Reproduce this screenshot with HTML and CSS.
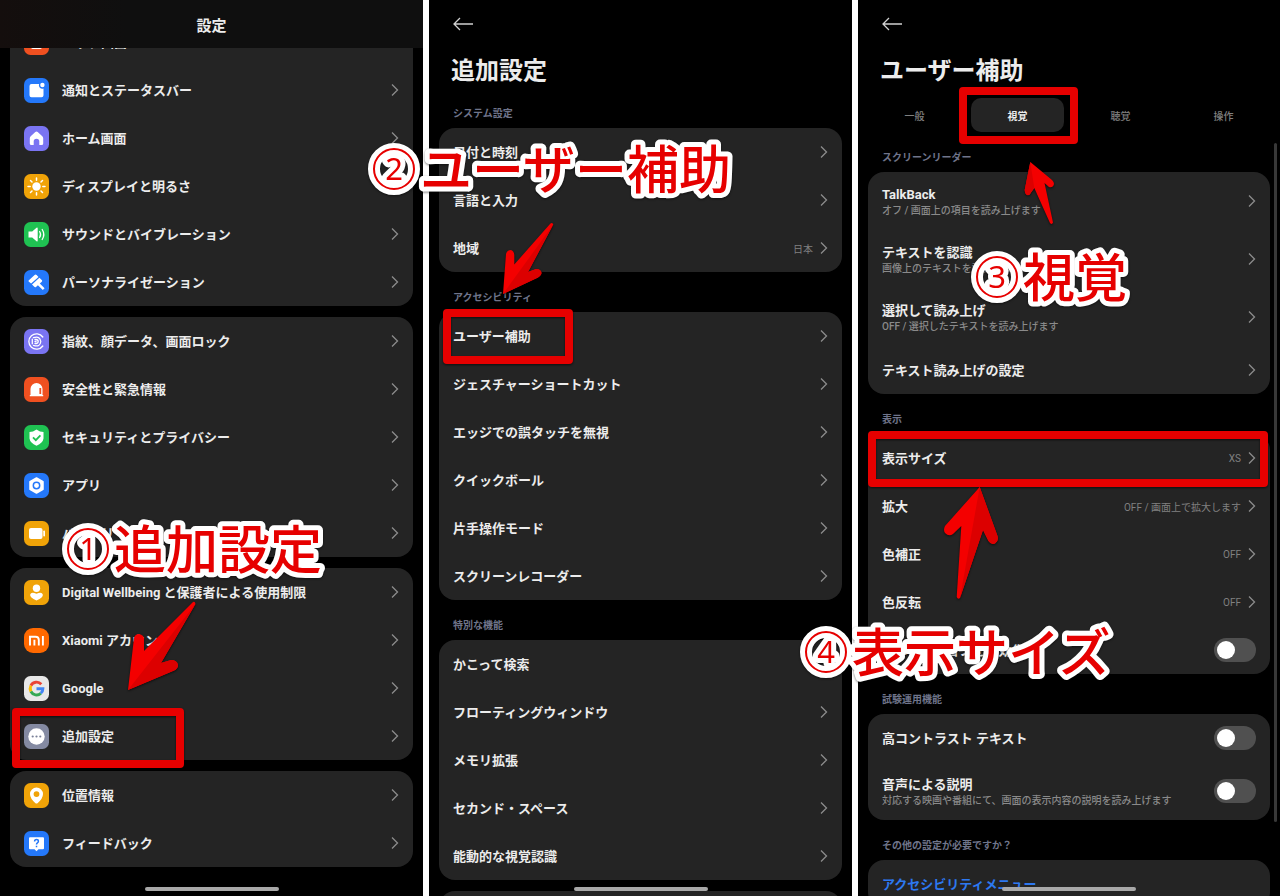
FILE: index.html
```
<!DOCTYPE html>
<html lang="ja">

<head>
    <meta charset="UTF-8">
    <meta name="viewport" content="width=device-width, initial-scale=1.0">
    <title>設定</title>
    <link rel="stylesheet" href="styles.css">
</head>

<body>
    <svg class="defs" aria-hidden="true">
        <symbol id="chevron" viewBox="0 0 8 14">
            <path d="M1 1.5l5.5 5.5L1 12.5" fill="none" stroke="#8c8c8c" stroke-width="1.3" />
        </symbol>
        <symbol id="back" viewBox="0 0 20 14">
            <path d="M7 1L1 7l6 6M1 7h19" fill="none" stroke="#d0d0d0" stroke-width="1.3" />
        </symbol>
    </svg>

    <main class="screens">
        <!-- settings top -->
        <section class="screen">
            <header class="bar">
                <h1>設定</h1>
            </header>
            <div class="scroll">
                <nav class="card">
                    <a class="row" href="#">
                        <svg class="icon" viewBox="0 0 25 25"><rect width="25" height="25" rx="6.5" fill="#f05020" /><rect x="7" y="6" width="11" height="13" rx="2" fill="#fff" /></svg>
                        <span class="name">ロック画面</span>
                        <svg class="chevron"><use href="#chevron" /></svg>
                    </a>
                    <a class="row" href="#">
                        <svg class="icon" viewBox="0 0 25 25"><rect width="25" height="25" rx="6.5" fill="#2478fa" /><path d="M7.5 6h7.6a3.4 3.4 0 0 0 4.4 4.4v6.800a2 2 0 0 1-2 2h-10a2 2 0 0 1-2-2V8a2 2 0 0 1 2-2z" fill="#fff" /><circle cx="18.400" cy="7" r="2.200" fill="#fff" /></svg>
                        <span class="name">通知とステータスバー</span>
                        <svg class="chevron"><use href="#chevron" /></svg>
                    </a>
                    <a class="row" href="#">
                        <svg class="icon" viewBox="0 0 25 25"><rect width="25" height="25" rx="6.5" fill="#7a74f2" /><path d="M11.300 6a1.800 1.800 0 0 1 2.400 0l4.600 4.200q.9.900.9 2V17.500a1.600 1.600 0 0 1-1.600 1.600h-2.300v-3.600a2.800 2.800 0 0 0-5.600 0v3.600H7.400a1.600 1.600 0 0 1-1.600-1.600v-5.300q0-1.100.9-2z" fill="#fff" /></svg>
                        <span class="name">ホーム画面</span>
                        <svg class="chevron"><use href="#chevron" /></svg>
                    </a>
                    <a class="row" href="#">
                        <svg class="icon" viewBox="0 0 25 25"><rect width="25" height="25" rx="6.5" fill="#f0a308" /><circle cx="12.500" cy="12.500" r="4.200" fill="#fff" /><path d="M12.500 4v2.200M12.500 18.800V21M4 12.500h2.200M18.800 12.500H21M6.500 6.500L8 8M17 17l1.500 1.500M6.500 18.500L8 17M17 8l1.500-1.500" stroke="#fff" stroke-width="1.500" stroke-linecap="round" /></svg>
                        <span class="name">ディスプレイと明るさ</span>
                        <svg class="chevron"><use href="#chevron" /></svg>
                    </a>
                    <a class="row" href="#">
                        <svg class="icon" viewBox="0 0 25 25"><rect width="25" height="25" rx="6.5" fill="#1fc252" /><path d="M4.500 9.500h3.700l4.300-3.800q1.200-.7 1.200.7v12.200q0 1.400-1.200.7l-4.300-3.800H4.500z" fill="#fff" /><path d="M15.600 9.500q2 3 0 6M18.200 7.500q3.200 5 0 10" fill="none" stroke="#fff" stroke-width="1.300" stroke-linecap="round" /></svg>
                        <span class="name">サウンドとバイブレーション</span>
                        <svg class="chevron"><use href="#chevron" /></svg>
                    </a>
                    <a class="row" href="#">
                        <svg class="icon" viewBox="0 0 25 25"><rect width="25" height="25" rx="6.5" fill="#2478fa" /><path d="M4.600 10.600l6-5.600q1-.8 2 0l1.900 2-7.400 6.600-2.500-2zM8 14.400l7.400-6.700 2.600 2.600q.5.800-.2 1.500l-2 1.800 4.800 4.600-1.800 1.700-4.900-4.700-1.900 1.700q-1 .6-1.700-.1z" fill="#fff" /></svg>
                        <span class="name">パーソナライゼーション</span>
                        <svg class="chevron"><use href="#chevron" /></svg>
                    </a>
                </nav>
                <nav class="card">
                    <a class="row" href="#">
                        <svg class="icon" viewBox="0 0 25 25"><rect width="25" height="25" rx="6.5" fill="#7a74f2" /><g fill="none" stroke="#fff" stroke-width="1.300" stroke-linecap="round"><path d="M18.800 8A7.700 7.700 0 1 0 18.800 17" /><path d="M9.500 8.700q6.500-2.200 7.300 3.800-.6 6-7.300 3.900M8.300 10.200v4.600M11 10.500h1q2.200.2 2.200 2t-2.200 2h-1M11 12.500h1" /></g></svg>
                        <span class="name">指紋、顔データ、画面ロック</span>
                        <svg class="chevron"><use href="#chevron" /></svg>
                    </a>
                    <a class="row" href="#">
                        <svg class="icon" viewBox="0 0 25 25"><rect width="25" height="25" rx="6.5" fill="#f05020" /><path d="M6.500 18v-6a6 6 0 0 1 12 0v6h.7v1.200H5.800V18z" fill="#fff" /><path d="M16.300 11v6" stroke="#f05020" stroke-width="1.800" /></svg>
                        <span class="name">安全性と緊急情報</span>
                        <svg class="chevron"><use href="#chevron" /></svg>
                    </a>
                    <a class="row" href="#">
                        <svg class="icon" viewBox="0 0 25 25"><rect width="25" height="25" rx="6.5" fill="#1fc252" /><path d="M12.500 4.500q3.500 2.500 7 2.500v6.500q-.6 4.500-7 7.200-6.400-2.700-7-7.200V7q3.500 0 7-2.500z" fill="#fff" /><path d="M9 12.300l2.800 2.800 4.600-4.800" fill="none" stroke="#1fc252" stroke-width="1.800" /></svg>
                        <span class="name">セキュリティとプライバシー</span>
                        <svg class="chevron"><use href="#chevron" /></svg>
                    </a>
                    <a class="row" href="#">
                        <svg class="icon" viewBox="0 0 25 25"><rect width="25" height="25" rx="6.5" fill="#2478fa" /><path d="M12.500 5l6.500 3.700v7.600L12.500 20 6 16.300V8.700z" fill="#fff" stroke="#fff" stroke-width="1.500" stroke-linejoin="round" /><circle cx="12.500" cy="12.500" r="3.200" fill="none" stroke="#2478fa" stroke-width="1.500" /></svg>
                        <span class="name">アプリ</span>
                        <svg class="chevron"><use href="#chevron" /></svg>
                    </a>
                    <a class="row" href="#">
                        <svg class="icon" viewBox="0 0 25 25"><rect width="25" height="25" rx="6.5" fill="#f0a308" /><rect x="5" y="7" width="13.500" height="11" rx="2" fill="#fff" /><rect x="19.300" y="9.500" width="1.700" height="6" rx=".8" fill="#fff" /></svg>
                        <span class="name">バッテリー</span>
                        <svg class="chevron"><use href="#chevron" /></svg>
                    </a>
                </nav>
                <nav class="card">
                    <a class="row" href="#">
                        <svg class="icon" viewBox="0 0 25 25"><rect width="25" height="25" rx="6.5" fill="#f0a308" /><circle cx="12.500" cy="8.200" r="3.700" fill="#fff" /><path d="M12.500 20.500q-7-3-6.300-6 .8-3 6.300-.8 5.500-2.200 6.300.8.700 3-6.300 6z" fill="#fff" /></svg>
                        <span class="name">Digital Wellbeing と保護者による使用制限</span>
                        <svg class="chevron"><use href="#chevron" /></svg>
                    </a>
                    <a class="row" href="#">
                        <svg class="icon" viewBox="0 0 25 25"><rect width="25" height="25" rx="9" fill="#ff6900" /><path d="M6 17.500V8.700h5.500q3.300 0 3.300 3.300v5.500M10.400 11.800v5.700M18.900 7.900v9.600" fill="none" stroke="#fff" stroke-width="1.900" /></svg>
                        <span class="name">Xiaomi アカウント</span>
                        <svg class="chevron"><use href="#chevron" /></svg>
                    </a>
                    <a class="row" href="#">
                        <svg class="icon" viewBox="0 0 25 25"><rect width="25" height="25" rx="6.5" fill="#e8e8e8" /><g fill="none" stroke-width="2.900"><path d="M17.300 8.200A6.400 6.400 0 0 0 6.900 9.700" stroke="#ea4335" /><path d="M6.900 9.700a6.400 6.400 0 0 0 0 5.800" stroke="#fbbc05" /><path d="M6.900 15.500a6.400 6.400 0 0 0 9.900 1.800" stroke="#34a853" /><path d="M16.800 17.300a6.400 6.400 0 0 0 2.100-4.600H12.500" stroke="#4285f4" /></g></svg>
                        <span class="name">Google</span>
                        <svg class="chevron"><use href="#chevron" /></svg>
                    </a>
                    <a class="row" href="#">
                        <svg class="icon" viewBox="0 0 25 25"><rect width="25" height="25" rx="6.5" fill="#848aa2" /><circle cx="12.500" cy="12.500" r="8.200" fill="#fff" /><g fill="#7a8098"><circle cx="8.700" cy="12.500" r="1.100" /><circle cx="12.500" cy="12.500" r="1.100" /><circle cx="16.300" cy="12.500" r="1.100" /></g></svg>
                        <span class="name">追加設定</span>
                        <svg class="chevron"><use href="#chevron" /></svg>
                    </a>
                </nav>
                <nav class="card">
                    <a class="row" href="#">
                        <svg class="icon" viewBox="0 0 25 25"><rect width="25" height="25" rx="6.5" fill="#f0a308" /><path fill-rule="evenodd" d="M12.500 4.500a6.500 6.500 0 0 1 6.500 6.500q0 4.500-5.500 9.200-1 .8-2 0Q6 15.500 6 11a6.500 6.500 0 0 1 6.500-6.500zm0 3.700a2.900 2.900 0 1 0 0 5.800 2.900 2.900 0 0 0 0-5.800z" fill="#fff" /></svg>
                        <span class="name">位置情報</span>
                        <svg class="chevron"><use href="#chevron" /></svg>
                    </a>
                    <a class="row" href="#">
                        <svg class="icon" viewBox="0 0 25 25"><rect width="25" height="25" rx="6.5" fill="#2478fa" /><path d="M6 6.300h13a1 1 0 0 1 1 1v10a1 1 0 0 1-1 1h-4.500l-2 2-2-2H6a1 1 0 0 1-1-1v-10a1 1 0 0 1 1-1z" fill="#fff" /><path d="M10.600 10.500q0-1.900 1.900-1.900t1.900 1.700q0 1-1 1.600-.9.600-.9 1.600M12.500 14.800v1.500" fill="none" stroke="#2478fa" stroke-width="1.500" /></svg>
                        <span class="name">フィードバック</span>
                        <svg class="chevron"><use href="#chevron" /></svg>
                    </a>
                </nav>
            </div>
            <div class="home"></div>
        </section>

        <!-- additional settings -->
        <section class="screen">
            <header class="head">
                <button class="back" aria-label="戻る"><svg><use href="#back" /></svg></button>
                <h1>追加設定</h1>
            </header>
            <h2>システム設定</h2>
            <nav class="card">
                <a class="row" href="#"><span class="name">日付と時刻</span><svg class="chevron"><use href="#chevron" /></svg></a>
                <a class="row" href="#"><span class="name">言語と入力</span><svg class="chevron"><use href="#chevron" /></svg></a>
                <a class="row" href="#"><span class="name">地域</span><span class="value">日本</span><svg class="chevron"><use href="#chevron" /></svg></a>
            </nav>
            <h2>アクセシビリティ</h2>
            <nav class="card">
                <a class="row" href="#"><span class="name">ユーザー補助</span><svg class="chevron"><use href="#chevron" /></svg></a>
                <a class="row" href="#"><span class="name">ジェスチャーショートカット</span><svg class="chevron"><use href="#chevron" /></svg></a>
                <a class="row" href="#"><span class="name">エッジでの誤タッチを無視</span><svg class="chevron"><use href="#chevron" /></svg></a>
                <a class="row" href="#"><span class="name">クイックボール</span><svg class="chevron"><use href="#chevron" /></svg></a>
                <a class="row" href="#"><span class="name">片手操作モード</span><svg class="chevron"><use href="#chevron" /></svg></a>
                <a class="row" href="#"><span class="name">スクリーンレコーダー</span><svg class="chevron"><use href="#chevron" /></svg></a>
            </nav>
            <h2>特別な機能</h2>
            <nav class="card">
                <a class="row" href="#"><span class="name">かこって検索</span><svg class="chevron"><use href="#chevron" /></svg></a>
                <a class="row" href="#"><span class="name">フローティングウィンドウ</span><svg class="chevron"><use href="#chevron" /></svg></a>
                <a class="row" href="#"><span class="name">メモリ拡張</span><svg class="chevron"><use href="#chevron" /></svg></a>
                <a class="row" href="#"><span class="name">セカンド・スペース</span><svg class="chevron"><use href="#chevron" /></svg></a>
                <a class="row" href="#"><span class="name">能動的な視覚認識</span><svg class="chevron"><use href="#chevron" /></svg></a>
            </nav>
            <div class="card next"></div>
            <div class="home"></div>
        </section>

        <!-- accessibility -->
        <section class="screen">
            <header class="head">
                <button class="back" aria-label="戻る"><svg><use href="#back" /></svg></button>
                <h1>ユーザー補助</h1>
            </header>
            <div class="tabs" role="tablist">
                <button role="tab">一般</button>
                <button role="tab" class="active" aria-selected="true">視覚</button>
                <button role="tab">聴覚</button>
                <button role="tab">操作</button>
            </div>
            <h2>スクリーンリーダー</h2>
            <nav class="card">
                <a class="row tall" href="#">
                    <span class="name">TalkBack<small>オフ / 画面上の項目を読み上げます</small></span>
                    <svg class="chevron"><use href="#chevron" /></svg>
                </a>
                <a class="row tall" href="#">
                    <span class="name">テキストを認識<small>画像上のテキストを認識します</small></span>
                    <svg class="chevron"><use href="#chevron" /></svg>
                </a>
                <a class="row tall" href="#">
                    <span class="name">選択して読み上げ<small>OFF / 選択したテキストを読み上げます</small></span>
                    <svg class="chevron"><use href="#chevron" /></svg>
                </a>
                <a class="row" href="#"><span class="name">テキスト読み上げの設定</span><svg class="chevron"><use href="#chevron" /></svg></a>
            </nav>
            <h2>表示</h2>
            <div class="card">
                <a class="row" href="#"><span class="name">表示サイズ</span><span class="value">XS</span><svg class="chevron"><use href="#chevron" /></svg></a>
                <a class="row" href="#"><span class="name">拡大</span><span class="value">OFF / 画面上で拡大します</span><svg class="chevron"><use href="#chevron" /></svg></a>
                <a class="row" href="#"><span class="name">色補正</span><span class="value">OFF</span><svg class="chevron"><use href="#chevron" /></svg></a>
                <a class="row" href="#"><span class="name">色反転</span><span class="value">OFF</span><svg class="chevron"><use href="#chevron" /></svg></a>
                <label class="row" for="animation"><span class="name">アニメーションを無効化</span><input class="switch" type="checkbox" id="animation"></label>
            </div>
            <h2>試験運用機能</h2>
            <div class="card">
                <label class="row" for="contrast"><span class="name">高コントラスト テキスト</span><input class="switch" type="checkbox" id="contrast"></label>
                <label class="row tall" for="description"><span class="name">音声による説明<small>対応する映画や番組にて、画面の表示内容の説明を読み上げます</small></span><input class="switch" type="checkbox" id="description"></label>
            </div>
            <h2>その他の設定が必要ですか？</h2>
            <nav class="card">
                <a class="row link" href="#"><span class="name">アクセシビリティメニュー</span></a>
            </nav>
            <div class="scrollbar"></div>
            <div class="home"></div>
        </section>
    </main>

    <!-- red marks over the three screens -->
    <svg class="marks" viewBox="0 0 1280 896">
        <g class="frames">
            <rect x="16" y="712" width="164" height="52" />
            <rect x="447" y="313" width="122" height="47" />
            <rect x="963" y="91" width="111" height="49" />
            <rect x="872" y="435" width="392" height="48" />
        </g>
        <g class="arrows">
            <path class="light" d="M128 690L134 638Q135 634 139 634Q144 635 144 639V651L193 602Q195 601 195.500 604L161 663L171 660Q177 660 178 665Q178 669 173 671Z" />
            <path class="dark" d="M128 690L195.500 604L161 663L171 660Q177 660 178 665Q178 669 173 671Z" />
            <path class="light" d="M503 294L506 254Q507 250 511 250Q514 251 514.300 255V264.500L550 224Q552 222 553.300 224.500L528 272L536 269Q541 269 541.500 273Q541 276 537 278Z" />
            <path class="dark" d="M503 294L553.300 224.500L528 272L536 269Q541 269 541.500 273Q541 276 537 278Z" />
            <path class="light" d="M1030.300 162L1024.700 190Q1025 195 1028 195.300Q1030 195 1031 192.500L1034.300 188L1050 223Q1052 225 1053 222.500L1044.500 183L1049 187Q1053 188 1054 184Q1054 182 1052 180Z" />
            <path class="dark" d="M1030.300 162L1024.700 190Q1025 195 1028 195.300Q1030 195 1031 192.500L1034.300 188Z" />
            <path class="light" d="M979.700 487L945 526Q943 530 945 533Q949 537 953 534L961.300 526L956.700 597Q958 600 960 598L983 530L988.500 541Q991 545 995 543.500Q999 541 997.500 536Z" />
            <path class="dark" d="M979.700 487L960 598L983 530L988.500 541Q991 545 995 543.500Q999 541 997.500 536Z" />
        </g>
        <g class="steps">
            <circle class="halo" cx="88" cy="549" r="20" />
            <circle class="ring" cx="88" cy="549" r="20" />
            <text class="num" x="88" y="560">1</text>
            <text x="114" y="569">追加設定</text>

            <circle class="halo" cx="394" cy="169" r="20" />
            <circle class="ring" cx="394" cy="169" r="20" />
            <text class="num" x="394" y="180">2</text>
            <text x="420" y="189">ユーザー補助</text>

            <circle class="halo" cx="997" cy="277" r="20" />
            <circle class="ring" cx="997" cy="277" r="20" />
            <text class="num" x="997" y="288">3</text>
            <text x="1023" y="297">視覚</text>

            <circle class="halo" cx="826" cy="652" r="20" />
            <circle class="ring" cx="826" cy="652" r="20" />
            <text class="num" x="826" y="663">4</text>
            <text x="852" y="672">表示サイズ</text>
        </g>
    </svg>
</body>

</html>
```
FILE: styles.css
```
* {
    box-sizing: border-box;
}

body {
    margin: 0;
    background-color: #fff;
    color: #ececec;
    font-family: Roboto, "Noto Sans CJK JP", sans-serif;
    font-size: 13px;
    position: relative;
}

h1,
h2 {
    margin: 0;
}

.defs {
    position: absolute;
    width: 0;
    height: 0;
}

.screens {
    display: grid;
    grid-template-columns: 423fr 423fr 422fr;
    gap: 6px;
    height: 100vh;
}

.screen {
    position: relative;
    display: flex;
    flex-direction: column;
    min-width: 0;
    padding: 0 10px;
    overflow: hidden;
    background-color: #000;
}

.screen > * {
    flex-shrink: 0;
}

/* top bar of the first screen */
.bar {
    height: 48px;
    margin: 0 -10px;
    display: flex;
    align-items: center;
    justify-content: center;
    background: linear-gradient(to right, #140e0d, #0f0f0f 30%);
}

.bar h1 {
    font-size: 15px;
}

.screen > .scroll {
    flex: 1 1 0;
    min-height: 0;
    overflow: hidden;
    display: flex;
    flex-direction: column;
    justify-content: flex-end;
    gap: 11px;
    padding-bottom: 29px;
}

.head {
    height: 88px;
    padding: 17px 12px 0;
    display: flex;
    flex-direction: column;
    gap: 22px;
}

.head h1 {
    font-size: 24px;
    line-height: 36px;
}

.back {
    width: 20px;
    height: 14px;
    margin-left: 2px;
    padding: 0;
    border: none;
    background: none;
}

.back svg {
    display: block;
    width: 20px;
    height: 14px;
}

h2 {
    height: 40px;
    padding: 12px 14px 0;
    font-size: 10px;
    line-height: 28px;
    font-weight: 700;
    color: #6f748a;
}

.card {
    flex-shrink: 0;
    border-radius: 16px;
    background-color: #242424;
}

.card.next {
    height: 48px;
    margin-top: 11px;
}

.row {
    height: 48px;
    padding: 0 14px;
    display: flex;
    align-items: center;
    color: inherit;
    text-decoration: none;
}

.row.tall {
    height: 58px;
}

.row.link {
    color: #2d78f0;
}

.icon {
    width: 25px;
    height: 25px;
    margin-right: 13px;
}

.name {
    flex: 1;
    padding-top: 1px;
    font-weight: 700;
    line-height: 18px;
    white-space: nowrap;
}

.name small {
    display: block;
    font-size: 10px;
    line-height: 14px;
    font-weight: 500;
    color: #8a8a8a;
}

.value {
    margin-right: 7px;
    font-size: 10px;
    color: #808080;
}

.chevron {
    width: 8px;
    height: 14px;
}

.switch {
    appearance: none;
    width: 42px;
    height: 24px;
    margin: 0;
    padding: 3px;
    border-radius: 12px;
    background-color: #505050;
}

.switch::before {
    content: "";
    display: block;
    width: 18px;
    height: 18px;
    border-radius: 50%;
    background-color: #fff;
}

.switch:checked {
    background-color: #2478fa;
}

.switch:checked::before {
    margin-left: auto;
}

.tabs {
    display: grid;
    grid-template-columns: repeat(4, 1fr);
    gap: 10px;
    padding-top: 10px;
}

.tabs button {
    height: 34px;
    padding: 0;
    border: none;
    border-radius: 10px;
    background: none;
    color: #808080;
    font-family: inherit;
    font-size: 10px;
    font-weight: 500;
}

.tabs .active {
    background-color: #242424;
    color: #ececec;
    font-weight: 700;
}

.home {
    position: absolute;
    bottom: 5px;
    left: 50%;
    width: 134px;
    height: 4px;
    border-radius: 2px;
    background-color: #a8a8a8;
    transform: translateX(-50%);
}

.scrollbar {
    position: absolute;
    top: 143px;
    right: 3px;
    bottom: 74px;
    width: 3px;
    border-radius: 2px;
    background-color: #383838;
}

.marks {
    position: absolute;
    top: 0;
    left: 0;
    width: 100%;
    pointer-events: none;
}

.frames rect {
    fill: none;
    stroke: #e60000;
    stroke-width: 8px;
    stroke-linejoin: round;
}

.arrows,
.frames {
    filter: drop-shadow(0 1px 1px rgba(0, 0, 0, 0.6));
}

.light {
    fill: #f40000;
}

.dark {
    fill: #dc0000;
}

.steps {
    filter: drop-shadow(0 1px 1px rgba(0, 0, 0, 0.5));
}

.steps text {
    font-family: "Noto Sans CJK JP", sans-serif;
    font-size: 52px;
    font-weight: 500;
    fill: #e60000;
    stroke: #fff;
    stroke-width: 10px;
    stroke-linejoin: round;
    paint-order: stroke;
}

.steps .num {
    font-family: "Noto Sans", sans-serif;
    font-size: 31px;
    font-weight: 400;
    text-anchor: middle;
}

/* the ring is drawn twice so that it keeps a white edge on both sides */
.halo {
    fill: none;
    stroke: #fff;
    stroke-width: 12px;
}

.ring {
    fill: none;
    stroke: #e60000;
    stroke-width: 2px;
}
```
